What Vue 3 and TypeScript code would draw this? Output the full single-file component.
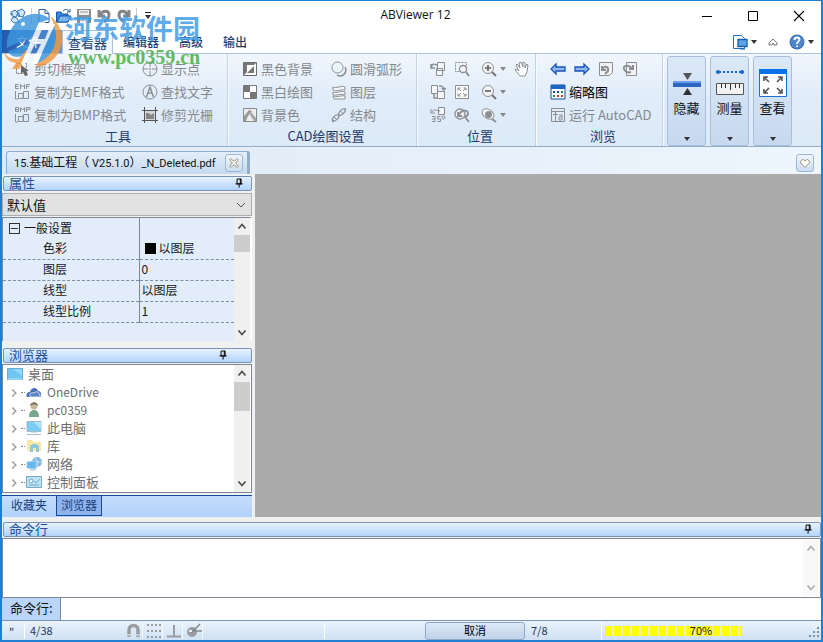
<script setup lang="ts">
import { ref } from 'vue'

interface Tool { icon: string; label: string }
interface TreeItem { icon: string; label: string; latin?: boolean }
interface PropRow { name: string; value: string; swatch?: boolean }

const g = '#8b8f94'
const icons: Record<string, string> = {
  app: '<path d="M2 4 6 2l3 3-2 4-4-1zM8 3l5-2 3 3-2 5-5-1zM4 9l4 1 2 4-5 1-3-3z" fill="#cfe4f7" stroke="#3377b8"/><path d="M1 6h3M9 4l2 5" stroke="#3377b8"/>',
  doc: '<path d="M3 1.500h6l4 4v9H3z" fill="#fff" stroke="#2a5c9a"/><path d="M9 1.500v4h4" fill="none" stroke="#2a5c9a"/>',
  open: '<path d="M.5 14V4H5l1 2h6v8z" fill="#3b86dc" stroke="#1358a8"/><path d="M1 14 4 8h11l-3 6z" fill="#7ab5f0" stroke="#1358a8"/><path d="M7 3c2-2 4-2 6 0m1-2v3h-3" fill="none" stroke="#1358a8"/>',
  save: '<path d="M1 1h14v14H1z" fill="#8e8e8e"/><path d="M3 2h10v5H3zM4 10h8v5H4z" fill="#eee"/><path d="M4 4h8M5 12h3" stroke="#999"/>',
  undo: '<path d="M3 2v6h6M4 7c3-5 9-5 9 0 0 3-2 5-5 7" fill="none" stroke="#858585" stroke-width="3"/>',
  redo: '<path d="M13 2v6H7M12 7C9 2 3 2 3 7c0 3 2 5 5 7" fill="none" stroke="#858585" stroke-width="3"/>',
  frame: `<path d="M1.500 2.500h10v10h-10z" fill="none" stroke="#777" stroke-dasharray="2 1"/><path d="M6 4v9l2-2 2 4 3-1-2-4h3z" fill="#666"/>`,
  target: `<circle cx="8" cy="8" r="7" fill="none" stroke="${g}"/><path d="M8 1v5M8 10v5M1 8h5M10 8h5" stroke="${g}"/><circle cx="8" cy="8" r="1" fill="${g}"/>`,
  emf: `<path d="M3.500 .5H.5v4h3M.5 2.500h3M5.500 5V.5l2 2.500 2-2.500V5M11.500 5V.5H15m-3.500 2H14M.5 7v8H3M3.500 14.500v-5H8v5zM8.500 14.500v-7h5v7z" fill="none" stroke="${g}"/>`,
  bmp: `<path d="M.5 4.500v-4h3v4zm0-2h3M5.500 5V.5l2 2.500 2-2.500V5M11.500 5V.5H15v2h-3.500M.5 7v8H3M3.500 14.500v-5H8v5zM8.500 14.500v-7h5v7z" fill="none" stroke="${g}"/>`,
  find: `<circle cx="8" cy="8" r="7" fill="none" stroke="${g}"/><path d="M4.500 13 8 3l3.500 10M6 9h4" fill="none" stroke="${g}" stroke-width="1.500"/>`,
  raster: '<path d="M3 3h10v10H3z" fill="#d5d8da"/><path d="M0 3.500h16M0 13.500h16M2.500 0v16M13.500 0v16" stroke="#555"/><path d="M4 12V6h3l2 2 3-2v6z" fill="#858585"/>',
  darkbg: '<path d="M1.500 1.500h13v13h-13z" fill="#fff" stroke="#6d6d6d"/><path d="M2 14V2h12l-2 2H5v7z" fill="#777"/><path d="M12 5v7H5z" fill="#777"/>',
  checker: '<path d="M1.500 1.500h13v13h-13z" fill="#fff" stroke="#777"/><path d="M2 2h6v6H2zM8 8h6v6H8z" fill="#777"/>',
  bgcolor: '<path d="M1.500 1.500h13v13h-13z" fill="#eee" stroke="#888"/><path d="M2 14V9l5-6 3 1-4 5-2 5z" fill="#999"/><path d="m9 5 5 6v3h-2L8 8z" fill="#a5a5a5"/>',
  arc: `<circle cx="6.500" cy="6.500" r="5.500" fill="none" stroke="${g}"/><path d="M14 6c3 6-3 11-8 8" fill="none" stroke="${g}" stroke-width="1.500"/>`,
  layers: `<path d="M2 3c3 2 9-2 12 0v3c-4-1-9 2-12 0zM2 8c3 2 8-2 12 0v3c-4-2-9 1-12 0zM2 12c3 2 8-1 12 0v3H3z" fill="#f7f7f7" stroke="${g}"/>`,
  structure: `<ellipse cx="4.500" cy="11" rx="2" ry="4" transform="rotate(45 4.500 11)" fill="none" stroke="${g}" stroke-width="1.300"/><ellipse cx="11" cy="5" rx="2" ry="4" transform="rotate(45 11 5)" fill="none" stroke="${g}" stroke-width="1.300"/><path d="m3 10 3 3M9.500 4l3 3M1 15l2-2M13 3l2-2" stroke="${g}"/>`,
  rotl: `<path d="M7.500 1.500h7v8h-7zM6.500 7.500h6v7h-6z" fill="#f3f5f7" stroke="${g}"/><path d="M1 3v4h4M1.500 6C2 2 4 3 7 4" fill="none" stroke="${g}" stroke-width="1.500"/>`,
  rotr: `<path d="M1.500 1.500h6v8h-6zM7.500 7.500h7v7h-7z" fill="#f3f5f7" stroke="${g}"/><path d="M9 2c4 0 5 1 5 4m-2-2 2 2 2-2M4 10v4h3" fill="none" stroke="${g}" stroke-width="1.500"/>`,
  angle: `<path d="M8.500 .5h6v7h-6z" fill="#f3f5f7" stroke="${g}"/><path d="M1 2v4h4M2 5c2-4 5-1 8-1M2 9.500h3v5H2m0-2.500h3M10.500 9.500H7.500v2.500h3v2.500h-3" fill="none" stroke="${g}"/><circle cx="13.500" cy="10.500" r="1.500" fill="none" stroke="${g}"/>`,
  zoomwin: `<path d="M1.500 1.500h11v9h-11z" fill="none" stroke="${g}" stroke-dasharray="2 1"/><circle cx="9" cy="8" r="3.500" fill="#f5f5f5" stroke="${g}" stroke-width="1.300"/><path d="m12 11 3 4" stroke="${g}" stroke-width="2"/>`,
  fit: `<path d="M1.500 1.500h13v13h-13z" fill="#fafafa" stroke="${g}"/><path d="M4 6.500V4h2.500M9.500 4H12v2.500M4 9.500V12h2.500M12 9.500V12H9.500M4 4l3 3M12 4 9 7M4 12l3-3M12 12 9 9" fill="none" stroke="${g}"/>`,
  zoomprev: `<circle cx="6" cy="7" r="5" fill="#eee" stroke="${g}" stroke-width="1.300"/><path d="M4 5v4h4M4.500 8C7 3 14 2 14 6s-2 3-3 4l4 5" fill="none" stroke="${g}" stroke-width="1.800"/>`,
  zoomin: `<circle cx="7" cy="7" r="5.500" fill="#f5f5f5" stroke="${g}"/><path d="M4 7h6M7 4v6M11 11l4 4" stroke="#777" stroke-width="2"/>`,
  zoomout: `<circle cx="7" cy="7" r="5.500" fill="#f5f5f5" stroke="${g}"/><path d="M4 7h6M11 11l4 4" stroke="#777" stroke-width="2"/>`,
  orbit: `<ellipse cx="7" cy="7" rx="6.500" ry="4.500" transform="rotate(35 7 7)" fill="#f5f5f5" stroke="${g}"/><circle cx="7.500" cy="7.500" r="3.500" fill="${g}"/><path d="m11 12 4 3" stroke="${g}" stroke-width="2"/>`,
  hand: `<path d="M6 15 1 9l1-1 3 2-3-6 1-1 3 4-1-5 2-1 2 5V1l2 1v5l2-4 1 1-1 7-2 4z" fill="#fff" stroke="${g}"/>`,
  back: '<path d="M1 8l5-5v3h9v4H6v3z" fill="#8fb8f2" stroke="#1d52b5" stroke-width="1.300"/>',
  forward: '<path d="M15 8l-5-5v3H1v4h9v3z" fill="#8fb8f2" stroke="#1d52b5" stroke-width="1.300"/>',
  pageback: `<path d="M1.500 1.500h13v10l-3 3h-10z" fill="#f3f3f3" stroke="${g}"/><path d="M4 5v4h4M4 8c3-4 7-2 6 2l-3 3" fill="none" stroke="${g}" stroke-width="2"/>`,
  pagefwd: `<path d="M4.500 1.500h10v13h-10z" fill="#f3f3f3" stroke="${g}"/><path d="M11 4v4H7M10 7C5 3 1 5 2 8s4 4 7 3" fill="none" stroke="${g}" stroke-width="2"/>`,
  thumbs: '<path d="M1 1h14v14H1z" fill="#fff" stroke="#174f9b"/><path d="M1 1h14v4H1z" fill="#1d66c7"/><path d="M3 7h2v2H3zM7 7h2v2H7z" fill="#174f9b"/><path d="M11 7h2v2h-2zM3 11h2v2H3z" fill="#139447"/><path d="M7 11h2v2H7zM11 11h2v2h-2z" fill="#d32b31"/>',
  acad: `<path d="M1.500 1.500h13v13h-13zM1 4.500h14M5.500 5v9M3 7.500h5M9 8h3v5H9v-3h3" fill="none" stroke="${g}"/>`,
  desktop: '<path d="M.5 2.500h15v11H.5z" fill="#70c5f5" stroke="#62a9d5"/><path d="M1 13h14" stroke="#c7ecff"/><path d="m6 3 9 0v7z" fill="#91d7fb"/>',
  cloud: '<path d="M1 13c-2-4 2-5 3-5 1-5 7-5 8-1 4 0 4 6 1 6z" fill="#496fb5"/><path d="M4 13c-1-4 2-5 4-4 3-3 6 0 5 2 3 0 3 2 2 2z" fill="#5f85c6" stroke="#fff" stroke-width=".7"/>',
  user: '<circle cx="8" cy="4" r="3.500" fill="#c5b69d"/><path d="M4 4c0-5 8-5 8 0-3-2-5-2-8 0z" fill="#837866"/><path d="M3 15c0-5 2-7 5-7s5 2 5 7z" fill="#77a88d"/>',
  pc: '<path d="M1 1.500h14v10H1z" fill="#7bccf5" stroke="#a2bbc9"/><path d="M7 2h8v7z" fill="#ade2fc"/><path d="M5 12h6M1 14.500h14" stroke="#a4c0ce"/>',
  library: '<path d="M1 2h5l1 2h8v9H1z" fill="#fae7a4"/><path d="M4 14V8c3-3 6-3 9 0v6h-3v-4H7v4z" fill="#8bc9df"/>',
  network: '<circle cx="11" cy="6" r="5" fill="#83b6de"/><path d="M9 2c3 2 3 6 2 9M6 6h10" fill="none" stroke="#cbe4f4"/><path d="m1 6 9-1v8l-9-1z" fill="#64b8ed" stroke="#a3cde6"/><path d="M4 14h5" stroke="#a3b6c1"/>',
  control: '<path d="M.5 2.500h15v11H.5z" fill="#bde3f6" stroke="#7fa8c0"/><circle cx="5" cy="7" r="2" fill="#eff8fc" stroke="#76a6bf"/><path d="m8 7 2 2 4-4M3 11h10" fill="none" stroke="#76a6bf"/>',
  snap: '<path d="M3 14V7c0-6 9-6 9 0v7" fill="none" stroke="#999da2" stroke-width="3.500"/><path d="M1 12h4M10 12h4" stroke="#e6eef6"/>',
  dots: '<g fill="#9a9ea3"><path d="M1 1h2v2H1zM5 1h2v2H5zM9 1h2v2H9zM13 1h2v2h-2zM1 7h2v2H1zM5 7h2v2H5zM9 7h2v2H9zM13 7h2v2h-2zM1 13h2v2H1zM5 13h2v2H5zM9 13h2v2H9zM13 13h2v2h-2z"/></g>',
  ortho: '<path d="M8 2v11M1 13.500h14" stroke="#9a9ea3" stroke-width="2"/>',
  polar: '<circle cx="6" cy="9" r="5" fill="#9a9ea3"/><path d="m5 10 9-9M8 8h8" stroke="#858a90" stroke-width="1.500"/><path d="M3 8h3" stroke="#eee" stroke-width="2"/>',
  pin: '<path d="M5 2.500h5v6H5zM9 2v7M3 8.500h9M7.500 9v4" fill="none" stroke="#000" stroke-width="1.200"/>',
  up: '<path d="m4.500 10 3.500-4 3.500 4" fill="none" stroke="#505050" stroke-width="1.800"/>',
  down: '<path d="m4.500 6 3.500 4 3.500-4" fill="none" stroke="#505050" stroke-width="1.800"/>',
  right: '<path d="m6 4 4 4-4 4" fill="none" stroke="#a0a0a0" stroke-width="1.800"/>',
  min: '<path d="M3 8.500h10" stroke="#000"/>',
  max: '<path d="M3.500 3.500h9v9h-9z" fill="none" stroke="#000"/>',
  close: '<path d="m3 3 10 10M13 3 3 13" stroke="#000" stroke-width="1.100"/>',
  style: '<path d="M1.500 1.500h8l3 3v10h-11z" fill="#fff" stroke="#2474c4"/><path d="M6 5.500h9v7H6z" fill="#5ca3ea" stroke="#1260af" stroke-width="1.300"/><path d="M8 15h5" stroke="#1260af"/>',
  collapse: '<path d="m4 9 4-4 4 4v2H9L8 9l-1 2H4z" fill="#fff" stroke="#777"/>',
  help: '<circle cx="8" cy="8" r="7.500" fill="#376fb9"/><circle cx="8" cy="8" r="6.500" fill="#4f86cb"/><path d="M5.500 6c0-3.500 5-3 5-.5C10.500 7.500 8 7.500 8 10M8 11.500v1.500" fill="none" stroke="#fff" stroke-width="1.800"/>',
  hide: '<path d="M10 4h9l-4.500 7z" fill="#555"/><path d="M0 12h28v6H0z" fill="#2b66c0"/><path d="M0 12h28v2H0z" fill="#6b9ee8"/><path d="M10 26h9l-4.500-7z" fill="#333"/>',
  measure: '<path d="M3 3h22" stroke="#1468d6" stroke-width="2" stroke-dasharray="2 2"/><circle cx="2" cy="3" r="2" fill="#1468d6"/><circle cx="26" cy="3" r="2" fill="#1468d6"/><path d="M.5 14.500h27v11H.5z" fill="#f1f1f1" stroke="#555"/><path d="M5.500 15v4M9.500 15v4M14.500 15v6M19.500 15v4M23.500 15v4" stroke="#333"/>',
  view: '<path d="M.5 1.500h27v26H.5z" fill="#fff" stroke="#1e6fd0"/><path d="M0 0h28v5H0z" fill="#0a72e8"/><path d="M5 12V8h4M19 8h4v4M5 20v4h4M23 20v4h-4M5 8l5 5M23 8l-5 5M5 24l5-5M23 24l-5-5" fill="none" stroke="#555" stroke-width="1.600"/>',
  fold: '<path d="m3 6 2-2h1l2 2 2-2h1l2 2v2l-5 5-5-5z" fill="#fff" stroke="#8a8068"/>',
  tabx: '<path d="m3 4 1-1 4 3 4-3 1 1-3 4 3 4-1 1-4-3-4 3-1-1 3-4z" fill="#fff" stroke="#8d8668"/>',
  grip: '<g fill="#7c93ac"><path d="M12 4h2v2h-2zM8 8h2v2H8zM12 8h2v2h-2zM4 12h2v2H4zM8 12h2v2H8zM12 12h2v2h-2z"/></g>',
}

const tools: Tool[] = [
  { icon: 'frame', label: '剪切框架' }, { icon: 'target', label: '显示点' },
  { icon: 'emf', label: '复制为EMF格式' }, { icon: 'find', label: '查找文字' },
  { icon: 'bmp', label: '复制为BMP格式' }, { icon: 'raster', label: '修剪光栅' },
]
const cad: Tool[] = [
  { icon: 'darkbg', label: '黑色背景' }, { icon: 'arc', label: '圆滑弧形' },
  { icon: 'checker', label: '黑白绘图' }, { icon: 'layers', label: '图层' },
  { icon: 'bgcolor', label: '背景色' }, { icon: 'structure', label: '结构' },
]
const position = ['rotl', 'zoomwin', 'zoomin', 'hand', 'rotr', 'fit', 'zoomout', '', 'angle', 'zoomprev', 'orbit']
const hasMenu = ['zoomin', 'zoomout', 'orbit']
const bigButtons: Tool[] = [
  { icon: 'hide', label: '隐藏' }, { icon: 'measure', label: '测量' }, { icon: 'view', label: '查看' },
]
const rows: PropRow[] = [
  { name: '色彩', value: '以图层', swatch: true },
  { name: '图层', value: '0' },
  { name: '线型', value: '以图层' },
  { name: '线型比例', value: '1' },
]
const tree: TreeItem[] = [
  { icon: 'cloud', label: 'OneDrive', latin: true }, { icon: 'user', label: 'pc0359', latin: true },
  { icon: 'pc', label: '此电脑' }, { icon: 'library', label: '库' },
  { icon: 'network', label: '网络' }, { icon: 'control', label: '控制面板' },
]
const percent = ref(70)
const command = ref('')
</script>

<template>
  <div class="window">
    <header class="title">
      <div class="quick">
        <svg class="ic app-ic" viewBox="0 0 16 16" v-html="icons.app" />
        <i class="qsep" />
        <button v-for="n in ['doc', 'open', 'save', 'undo', 'redo']" :key="n" :aria-label="n"><svg class="ic" viewBox="0 0 16 16" v-html="icons[n]" /></button>
        <i class="qsep" />
        <button class="more" aria-label="more"><i class="caret" /></button>
      </div>
      <h1>ABViewer 12</h1>
      <div class="winbtns">
        <button v-for="n in ['min', 'max', 'close']" :key="n" :aria-label="n"><svg class="ic" viewBox="0 0 16 16" v-html="icons[n]" /></button>
      </div>
    </header>

    <nav class="tabs">
      <button class="file">文件</button>
      <button class="tab active">查看器</button>
      <button class="tab">编辑器</button>
      <button class="tab">高级</button>
      <button class="tab">输出</button>
      <div class="tabtools">
        <button aria-label="style"><svg class="ic" viewBox="0 0 16 16" v-html="icons.style" /><i class="caret" /></button>
        <button aria-label="collapse"><svg class="ic" viewBox="0 0 16 16" v-html="icons.collapse" /></button>
        <button aria-label="help"><svg class="ic" viewBox="0 0 16 16" v-html="icons.help" /><i class="caret" /></button>
      </div>
    </nav>

    <section class="ribbon">
      <div class="group tools">
        <div class="cells">
          <button v-for="t in tools" :key="t.label" class="tool"><svg class="ic" viewBox="0 0 16 16" v-html="icons[t.icon]" />{{ t.label }}</button>
        </div>
        <h2>工具</h2>
      </div>
      <div class="group cad">
        <div class="cells">
          <button v-for="t in cad" :key="t.label" class="tool"><svg class="ic" viewBox="0 0 16 16" v-html="icons[t.icon]" />{{ t.label }}</button>
        </div>
        <h2>CAD绘图设置</h2>
      </div>
      <div class="group pos">
        <div class="cells">
          <template v-for="(n, i) in position" :key="i">
            <button v-if="n" class="tool" :aria-label="n"><svg class="ic" viewBox="0 0 16 16" v-html="icons[n]" /><i v-if="hasMenu.includes(n)" class="caret gray" /></button>
            <span v-else />
          </template>
        </div>
        <h2>位置</h2>
      </div>
      <div class="group browse">
        <div class="cells">
          <div class="arrows">
            <button v-for="n in ['back', 'forward', 'pageback', 'pagefwd']" :key="n" class="tool" :aria-label="n"><svg class="ic" viewBox="0 0 16 16" v-html="icons[n]" /></button>
          </div>
          <button class="tool on"><svg class="ic" viewBox="0 0 16 16" v-html="icons.thumbs" />缩略图</button>
          <button class="tool"><svg class="ic" viewBox="0 0 16 16" v-html="icons.acad" />运行 AutoCAD</button>
        </div>
        <h2>浏览</h2>
      </div>
      <div class="bigs">
        <button v-for="b in bigButtons" :key="b.label" class="big">
          <svg viewBox="0 0 28 28" v-html="icons[b.icon]" />
          <span>{{ b.label }}</span>
          <i class="caret" />
        </button>
      </div>
    </section>

    <div class="docs">
      <div class="doc">
        <span><small>15.</small>基础工程（<small> V25.1.0</small>）<small>_N_Deleted.pdf</small></span>
        <button class="mini" aria-label="close tab"><svg viewBox="0 0 16 16" v-html="icons.tabx" /></button>
      </div>
      <button class="mini" aria-label="tab list"><svg viewBox="0 0 16 16" v-html="icons.fold" /></button>
    </div>

    <main class="body">
      <aside class="side">
        <div class="bar"><h3>属性</h3><button aria-label="pin"><svg class="pin" viewBox="0 0 16 16" v-html="icons.pin" /></button></div>
        <div class="combo">
          <select aria-label="属性"><option>默认值</option></select>
          <svg class="ic" viewBox="0 0 16 16" aria-hidden="true"><path d="m4 6 4 4 4-4" fill="none" stroke="#555" /></svg>
        </div>
        <div class="props">
          <table>
            <tbody>
              <tr class="head"><th><i class="minus" />一般设置</th><td></td></tr>
              <tr v-for="r in rows" :key="r.name"><th>{{ r.name }}</th><td><i v-if="r.swatch" class="swatch" />{{ r.value }}</td></tr>
            </tbody>
          </table>
          <div class="scroll"><svg viewBox="0 0 16 16" v-html="icons.up" /><i class="thumb short" /><svg class="last" viewBox="0 0 16 16" v-html="icons.down" /></div>
        </div>
        <div class="bar second"><h3>浏览器</h3><button aria-label="pin"><svg class="pin" viewBox="0 0 16 16" v-html="icons.pin" /></button></div>
        <div class="treebox">
          <ul>
            <li class="root"><svg class="ic" viewBox="0 0 16 16" v-html="icons.desktop" />桌面</li>
            <li v-for="t in tree" :key="t.label" :class="{ latin: t.latin }">
              <svg class="exp" viewBox="0 0 16 16" v-html="icons.right" /><i class="dash" />
              <svg class="ic" viewBox="0 0 16 16" v-html="icons[t.icon]" />{{ t.label }}
            </li>
          </ul>
          <div class="scroll"><svg viewBox="0 0 16 16" v-html="icons.up" /><i class="thumb" /><svg class="last" viewBox="0 0 16 16" v-html="icons.down" /></div>
        </div>
        <div class="sidetabs"><button>收藏夹</button><button class="cur">浏览器</button></div>
      </aside>
      <div class="canvas"></div>
    </main>

    <section class="cmd">
      <div class="bar"><h3>命令行</h3><button aria-label="pin"><svg class="pin" viewBox="0 0 16 16" v-html="icons.pin" /></button></div>
      <div class="output"><div class="scroll faint"><svg viewBox="0 0 16 16" v-html="icons.up" /><svg class="last" viewBox="0 0 16 16" v-html="icons.down" /></div></div>
      <div class="entry"><label for="cmdline">命令行:</label><input id="cmdline" v-model="command" type="text"></div>
    </section>

    <footer class="status">
      <span class="s-quote">"</span>
      <span class="s-page">4/38</span>
      <div class="s-modes">
        <button v-for="n in ['snap', 'dots', 'ortho', 'polar']" :key="n" :aria-label="n"><svg class="ic" viewBox="0 0 16 16" v-html="icons[n]" /></button>
      </div>
      <span class="s-mid"></span>
      <span class="s-gap"></span>
      <button class="cancel">取消</button>
      <span class="s-count">7/8</span>
      <div class="s-prog" role="progressbar" :aria-valuenow="percent">
        <div class="fill" :style="{ width: percent + '%' }"></div>
        <span class="pct">{{ percent }}%</span>
      </div>
      <svg class="ic grip" viewBox="0 0 16 16" v-html="icons.grip" />
    </footer>

    <div class="mark">
      <svg viewBox="0 0 62 62">
        <path d="M4 38C2 14 28-6 47 9L39 12 31 28C22 31 12 33 4 38z" fill="#3c96dd" />
        <path d="M5 41c8-2 16-6 23-9l-8 14C12 48 7 46 5 41z" fill="#3c96dd" />
        <path d="M34 55 45 28 50 13c9 14 4 35-16 42z" fill="#3c96dd" />
        <path d="M47 6c20 14 15 45-12 51l-2-3c21-8 25-30 14-48z" fill="#f29a3e" />
        <path d="M1 42c3 5 9 8 15 7l7-9h5L16 59H9l4-6C6 52 2 48 1 42z" fill="#f29a3e" />
        <path d="M36 12h6l-7 17h7l6-15h4L34 54h-6l10-20h-6l-10 20h-4z" fill="#fff" />
        <circle cx="20" cy="14" r="2" fill="#fff" />
      </svg>
      <div><b>河东软件园</b><em>www.pc0359.cn</em></div>
    </div>
  </div>
</template>

<style>
html, body { margin: 0; }
</style>
<style scoped>
.window { position: relative; display: flex; flex-direction: column; box-sizing: border-box; min-height: 100vh; border: 2px solid #1f7fd0; border-top-width: 1px; background: #f0f0f0; font: 12px/16px "Noto Sans CJK SC", "Noto Sans", sans-serif; color: #111; overflow: hidden; }
.window *, .window *::before { box-sizing: border-box; }
button { font: inherit; color: inherit; background: none; border: 0; padding: 0; margin: 0; display: inline-flex; align-items: center; }
h1, h2, h3 { margin: 0; font-weight: 400; }
svg { display: block; flex: none; }
.ic { width: 16px; height: 16px; }
.caret { border: 3px solid transparent; border-top: 4px solid #333; border-bottom: 0; }
.caret.gray { border-top-color: #888; }

.title { display: grid; grid-template-columns: 1fr auto 1fr; align-items: center; height: 29px; background: #fff; }
.title h1 { font: 12px/16px "Open Sans", "Noto Sans", sans-serif; padding: 0 0 2px 8px; }
.quick { display: flex; align-items: center; gap: 4px; padding-left: 5px; }
.app-ic { width: 20px; }
.qsep { width: 1px; height: 16px; background: #ccc; }
.quick .more { margin-left: 4px; border-top: 1px solid #222; padding-top: 2px; }
.winbtns { display: flex; justify-content: flex-end; }
.winbtns button { width: 46px; height: 28px; padding-left: 2px; justify-content: center; }

.tabs { display: flex; height: 24px; background: #fff; border-bottom: 1px solid #adc3dc; color: #1c3f6e; }
.file { width: 60px; padding-left: 14px; background: linear-gradient(90deg, #2359ac, #5a94d8); color: #fff; }
.tab { padding: 0 10px; font-weight: 500; }
.tab.active { font-size: 13px; padding: 0 5px; font-weight: 400; height: 24px; background: #f3f8fe; border: 1px solid #adc3dc; border-bottom: 0; }
.tabtools { display: flex; gap: 8px; margin-left: auto; padding-right: 7px; }
.tabtools button { gap: 3px; }

.ribbon { display: flex; height: 93px; background: linear-gradient(#f0f6fd, #e0ecf9 50%, #dce9f7); border-bottom: 1px solid #93acca; }
.group { display: flex; flex-direction: column; padding-top: 3px; border-right: 1px solid #c3d3e6; box-shadow: 1px 0 #f8fbff; }
.group h2 { font-size: 13px; line-height: 20px; text-align: center; color: #1e3a68; }
.cells { display: grid; grid-auto-rows: 23px; align-items: center; font-size: 13px; color: #85898d; }
.tool { gap: 3px; white-space: nowrap; height: 22px; }
.tool.on { color: #000; }
.tools { width: 226px; }
.tools h2 { padding-left: 7px; }
.tools .cells { grid-template-columns: 127px 1fr; padding-left: 13px; }
.cad { width: 189px; }
.cad h2, .browse h2, .pos h2 { padding-left: 8px; }
.cad .cells { grid-template-columns: 89px 1fr; padding-left: 14px; }
.pos { width: 119px; }
.pos .cells { grid-template-columns: 24px 27px 33px 1fr; padding-left: 13px; }
.browse { width: 127px; }
.browse .cells { padding-left: 14px; }
.arrows { display: flex; gap: 8px; }
.bigs { display: flex; gap: 4px; padding: 2px 4px 0; }
.big { width: 39px; height: 90px; flex-direction: column; border: 1px solid #a9bfd9; border-radius: 3px; background: linear-gradient(#dce8f6, #c6d9f0); font-size: 13px; padding: 12px 0 4px; }
.big svg { width: 28px; height: 28px; }
.big span { margin-top: 2px; line-height: 18px; }
.big .caret { margin-top: auto; }

.docs { display: flex; align-items: flex-end; justify-content: space-between; height: 27px; padding: 0 7px 0 4px; background: linear-gradient(90deg, #dfeaf7, #edf5fd); }
.doc { display: flex; align-items: center; gap: 9px; height: 23px; padding: 0 4px 0 7px; border: 1px solid #93acca; border-right-width: 3px; border-bottom: 0; border-radius: 3px 3px 0 0; background: linear-gradient(#e4eefa, #c6d9f0); white-space: nowrap; }
.doc small { font: 11px/16px Roboto, sans-serif; }
.mini { width: 18px; height: 18px; justify-content: center; border: 1px solid #9db6d3; border-radius: 3px; background: linear-gradient(#f0f5fb, #ccddf0); }
.docs > .mini { margin-bottom: 2px; }
.mini svg { width: 14px; height: 14px; }

.body { flex: 1; display: flex; gap: 3px; }
.side { width: 250px; display: flex; flex-direction: column; padding-top: 2px; }
.canvas { flex: 1; background: #ababab; }
.bar { display: flex; align-items: center; justify-content: space-between; height: 15px; margin-left: 1px; padding: 0 5px; border: 1px solid #7d93b3; border-radius: 2px; background: linear-gradient(#e8f3ff, #b3d3fb); }
.bar h3 { font-size: 13px; line-height: 13px; padding-bottom: 2px; color: #234f96; }
.pin { width: 13px; height: 13px; }
.second { margin-top: 7px; }
.second button { margin-right: 16px; }
.combo { position: relative; margin-top: 2px; height: 23px; border: 1px solid #adadad; background: #e1e1e1; }
.combo select { width: 100%; height: 21px; appearance: none; border: 0; border-radius: 0; background: transparent; font: 13px/19px "Noto Sans CJK SC", sans-serif; color: #111; padding: 0 4px; }
.combo svg { position: absolute; right: 2px; top: 3px; pointer-events: none; }
.props { display: flex; margin-top: 1px; height: 124px; background: #e3edf9; border-top: 1px solid #7d8894; border-left: 1px solid #7d8894; border-right: 2px solid #fff; }
.props table { flex: 1; align-self: flex-start; table-layout: fixed; border-collapse: collapse; }
.props th, .props td { height: 21px; padding: 0 0 1px 2px; font-weight: 400; text-align: left; line-height: 16px; border-bottom: 1px dashed #7d8fa5; color: #15181c; }
.props th { width: 136px; padding-left: 40px; border-right: 1px solid #7d8894; }
.props .head th { padding-left: 6px; }
.props .head th, .props .head td { height: 20px; border-bottom-style: none; }
.minus { display: inline-block; width: 11px; height: 11px; margin-right: 4px; vertical-align: -1px; border: 1px solid #333; background: linear-gradient(#333, #333) center / 7px 1px no-repeat; }
.swatch { display: inline-block; width: 11px; height: 11px; margin: 0 3px 0 3px; vertical-align: -1px; background: #000; }
.scroll { width: 16px; display: flex; flex-direction: column; background: #f0f0f0; }
.scroll svg { width: 16px; height: 17px; }
.scroll .last { margin-top: auto; }
.thumb { height: 29px; background: #cdcdcd; }
.thumb.short { height: 17px; }
.treebox { display: flex; flex: 1; margin-top: 1px; border: 1px solid #7d8894; background: #fff; min-height: 129px; }
.treebox ul { flex: 1; list-style: none; margin: 0; padding: 0 0 0 4px; font-size: 13px; color: #6e6e6e; }
.treebox li { display: flex; align-items: center; height: 18px; }
.treebox .latin { font-size: 12px; }
.treebox li .ic { margin-right: 5px; }
.exp { width: 14px; height: 14px; margin-top: 2px; }
.dash { width: 4px; margin: 0 1px 0 0; border-top: 1px dotted #888; }
.treebox .scroll { margin-right: 1px; }
.sidetabs { display: flex; height: 22px; margin-top: 2px; border-top: 1px solid #17489a; background: linear-gradient(#c5ddfb, #b0d2fb); color: #1c3f7e; }
.sidetabs button { height: 20px; padding: 0 9px 3px; }
.sidetabs .cur { padding: 0 4px 2px; border: 1px solid #17489a; border-top: 0; background: #8fb4ec; }

.cmd { padding-top: 5px; }
.output { display: flex; justify-content: flex-end; height: 60px; margin-top: 1px; padding: 1px; border: 1px solid #7d8894; background: #fff; }
.faint { opacity: .45; }
.entry { display: flex; height: 22px; background: #fff; }
.entry label { width: 59px; padding-left: 8px; line-height: 20px; font-size: 13px; background: #b9d6fa; border-right: 1px solid #7d8894; }
.entry input { flex: 1; min-width: 0; border: 0; background: #fff; font: inherit; outline: 0; padding: 0 4px; }

.status { display: flex; align-items: center; height: 20px; border-top: 1px solid #7d93b3; background: linear-gradient(#eaf3fc, #cfe0f3); color: #1f3556; font-size: 11px; }
.s-quote { width: 23px; padding-left: 7px; border-right: 1px solid #fff; }
.s-page { width: 101px; padding: 0 0 2px 5px; }
.s-modes { display: flex; gap: 3px; }
.s-modes button { border-right: 1px solid #f5f9fe; }
.s-mid { flex: 6; height: 16px; border-right: 1px solid #f8fbff; }
.s-gap { flex: 5; }
.cancel { width: 100px; height: 18px; padding-bottom: 1px; justify-content: center; border: 1px solid #8fa8c6; border-radius: 3px; background: linear-gradient(#dce8f6, #bfd3ea); color: #000; }
.s-count { width: 77px; padding: 0 0 2px 6px; border-right: 1px solid #fff; }
.s-prog { position: relative; width: 198px; height: 18px; display: flex; align-items: center; padding-left: 3px; }
.fill { height: 10px; background: repeating-linear-gradient(90deg, #ff0 0 7px, #f0f4b0 7px 9px); }
.pct { position: absolute; inset: 0; text-align: center; line-height: 16px; color: #222; }
.grip { margin-left: 5px; }

.mark { position: absolute; left: 1px; top: 9px; display: flex; opacity: .82; pointer-events: none; }
.mark svg { width: 62px; height: 62px; }
.mark div { display: flex; flex-direction: column; padding-top: 2px; }
.mark b { font: 700 27px/32px "Noto Sans CJK SC", sans-serif; color: #3e9be6; }
.mark em { font: 700 20px/26px "Liberation Serif", serif; color: #45ad45; padding-left: 3px; }
</style>
